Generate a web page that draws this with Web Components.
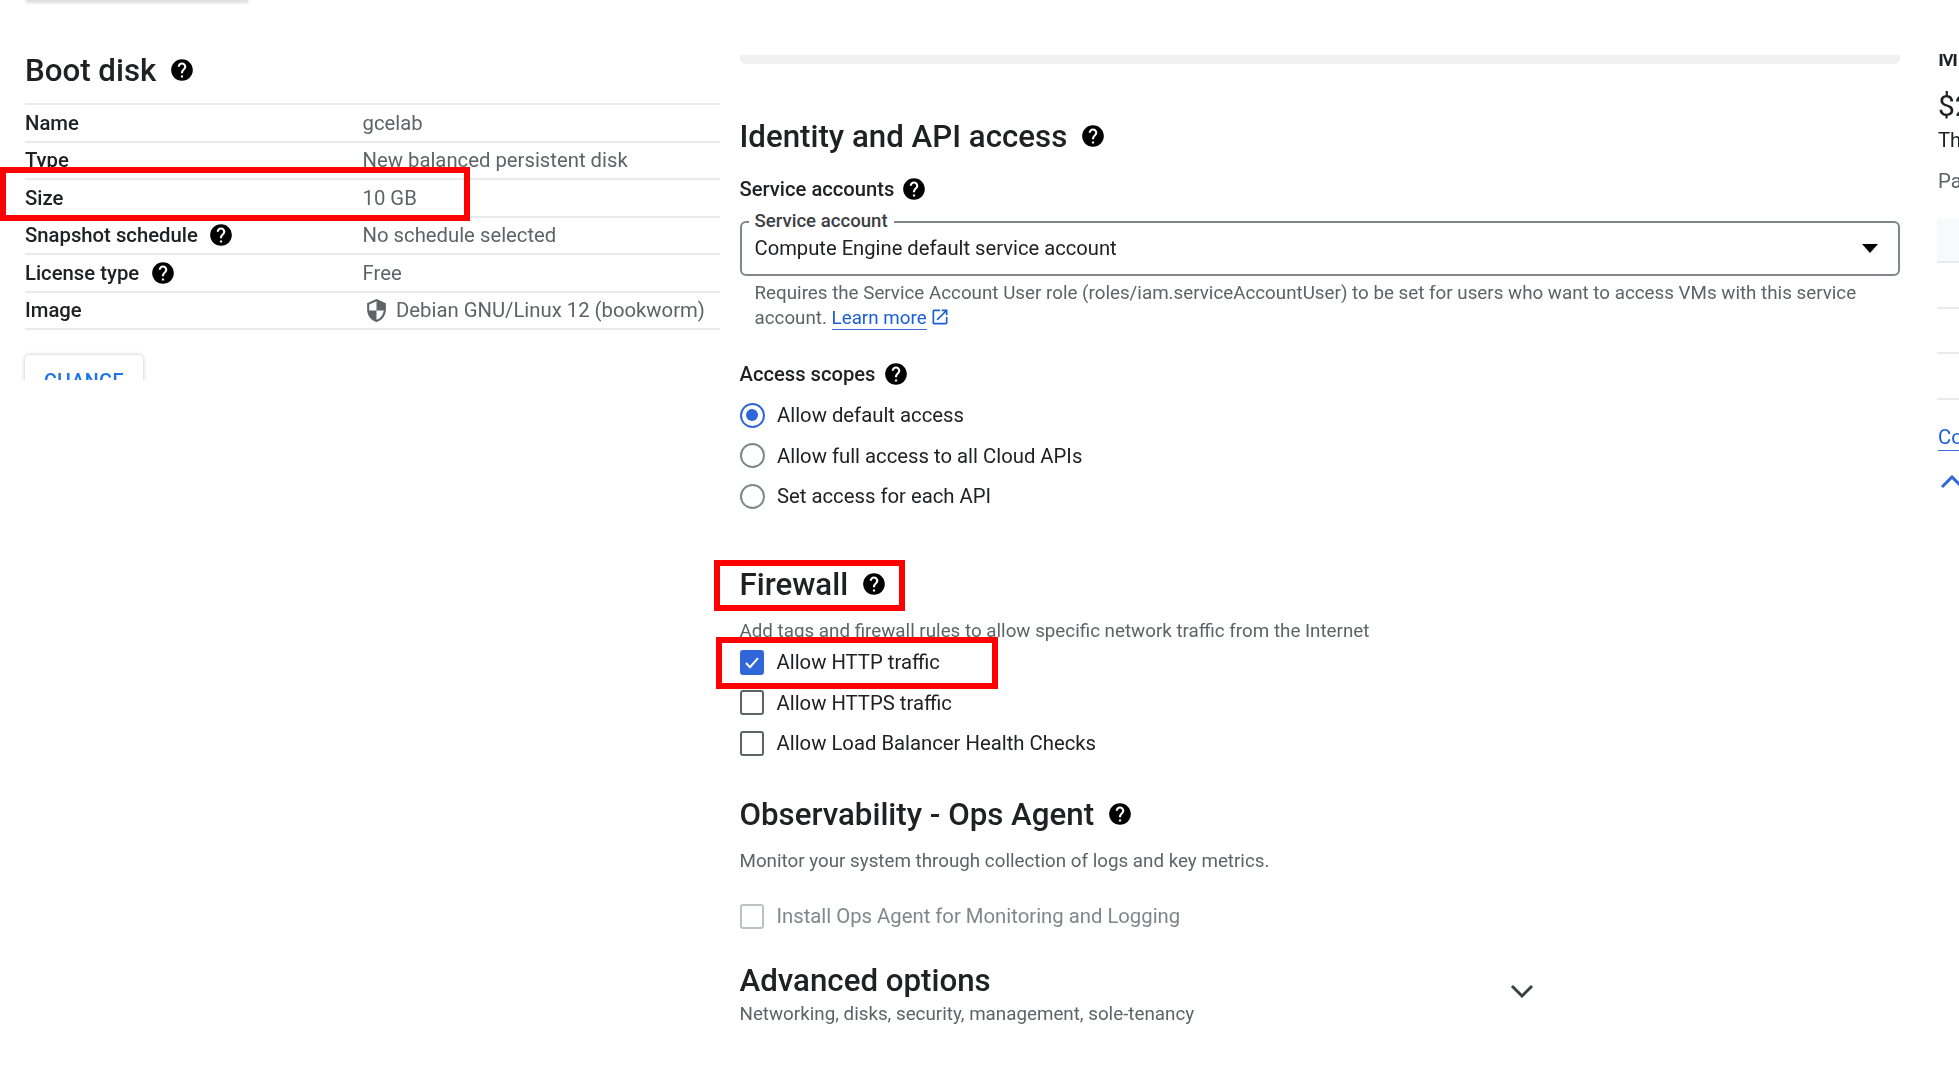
<!DOCTYPE html>
<html lang="en"><head><meta charset="utf-8"><title>Create an instance</title>
<style>
html,body{margin:0;padding:0;height:1070px;overflow:hidden;background:#fff}
body{font-family:Roboto,"Liberation Sans",sans-serif;color:#202124;font-size:20.3px}
</style></head><body>
<gce-page>
  <gce-boot slot="left"></gce-boot>
  <gce-main slot="main"></gce-main>
  <gce-cost slot="right"></gce-cost>
  <gce-mark slot="marks" style="left:0;top:167px;width:470px;height:54px"></gce-mark>
  <gce-mark slot="marks" style="left:714px;top:560px;width:191px;height:51px"></gce-mark>
  <gce-mark slot="marks" style="left:716px;top:637px;width:282px;height:52px"></gce-mark>
</gce-page>
<script>
const P={
 help:'M12 2C6.48 2 2 6.48 2 12s4.48 10 10 10 10-4.48 10-10S17.52 2 12 2zm1 17h-2v-2h2v2zm2.07-7.75l-.9.92C13.45 12.9 13 13.5 13 15h-2v-.5c0-1.1.45-2.1 1.17-2.83l1.24-1.26c.37-.36.59-.86.59-1.41 0-1.1-.9-2-2-2s-2 .9-2 2H8c0-2.21 1.79-4 4-4s4 1.79 4 4c0 .88-.36 1.68-.93 2.25z',
 shield:'M12 1L3 5v6c0 5.55 3.84 10.74 9 12 5.16-1.26 9-6.45 9-12V5l-9-4zm0 10.99h7c-.53 4.12-3.28 7.79-7 8.94V12H5V6.3l7-3.11v8.8z',
 open:'M19 19H5V5h7V3H5c-1.11 0-2 .9-2 2v14c0 1.1.89 2 2 2h14c1.1 0 2-.9 2-2v-7h-2v7zM14 3v2h3.59l-9.83 9.83 1.41 1.41L19 6.41V10h2V3h-7z'
};
const def=(n,css,html)=>customElements.define(n,class extends HTMLElement{
  constructor(){super();this.attachShadow({mode:'open'}).innerHTML='<style>'+css+'</style>'+(typeof html==='function'?html(this):html)}
  connectedCallback(){ if(typeof html==='function') this.shadowRoot.innerHTML='<style>'+css+'</style>'+html(this) }
});
def('gce-page',`:host{display:block;position:relative;width:1959px;height:1070px;overflow:hidden}
 .cols{display:flex;align-items:flex-start;filter:blur(.4px);height:1070px}
 ::slotted([slot=left]){width:695px;margin-left:25px;flex:none}
 ::slotted([slot=main]){width:1160px;margin-left:19.5px;flex:none}
 ::slotted([slot=right]){width:300px;margin-left:38.5px;flex:none}`,
 `<div class="cols"><slot name="left"></slot><slot name="main"></slot><slot name="right"></slot></div><slot name="marks"></slot>`);
def('gce-mark',`:host{display:block;position:absolute;box-sizing:border-box;border:6px solid #f00;pointer-events:none}`,'');
def('gce-help',`:host{display:inline-flex;flex:none;color:#000}svg{display:block;width:100%;height:100%;fill:currentColor}`,
 `<svg viewBox="0 0 24 24"><path d="${P.help}"/></svg>`);
def('gce-title',`:host{display:flex;align-items:center;height:36px;font:500 31.25px/36px Roboto,sans-serif;color:#202124;white-space:nowrap}
 gce-help{width:26px;height:26px;margin-left:13px;margin-top:-2px}`,
 `<slot></slot><gce-help></gce-help>`);
def('gce-sub',`:host{display:flex;align-items:center;height:25px;font:500 20.2px/25px Roboto,sans-serif;color:#202124;white-space:nowrap}
 gce-help{width:26px;height:26px;margin-left:7px;margin-top:-1px}`,`<slot></slot><gce-help></gce-help>`);
def('gce-row',`:host{display:grid;grid-template-columns:337.5px 1fr;align-items:center;box-sizing:border-box;height:37.5px;border-bottom:2px solid #e8eaed;font-size:20.3px;white-space:nowrap}
 .k{display:flex;align-items:center;font-weight:500;color:#202124}
 .v{color:#5f6368;display:flex;align-items:center}
 gce-help{width:26px;height:26px;margin-left:10.5px}
 svg{width:25px;height:25px;fill:#5f6368;margin-right:7.5px;margin-left:1px;flex:none}`,
 el=>`<div class="k">${el.getAttribute('k')||''}${el.hasAttribute('help')?'<gce-help></gce-help>':''}</div><div class="v">${el.hasAttribute('shield')?`<svg viewBox="0 0 24 24"><path d="${P.shield}"/></svg>`:''}<slot></slot></div>`);
def('gce-boot',`:host{display:block}
 .stub{width:222px;height:1px;margin-left:1px;background:#e0e0e0;box-shadow:0 1px 3px rgba(60,64,67,.55)}
 gce-title{margin-top:52px}
 .tbl{margin-top:14px;border-top:2px solid #e8eaed}
 .clip{height:25px;margin:5px 0 0 -10px;padding:20px 0 0 10px;overflow:hidden}
 .btn{width:118px;height:50px;box-sizing:border-box;border-radius:5px;background:#fff;box-shadow:0 0 4px rgba(60,64,67,.3);color:#1a73e8;font:500 19.6px/50px Roboto,sans-serif;text-align:center;letter-spacing:.3px;padding-top:1.5px}`,
 `<div class="stub"></div><gce-title>Boot disk</gce-title>
 <div class="tbl">
  <gce-row k="Name">gcelab</gce-row><gce-row k="Type">New balanced persistent disk</gce-row>
  <gce-row k="Size">10 GB</gce-row><gce-row k="Snapshot schedule" help>No schedule selected</gce-row>
  <gce-row k="License type" help>Free</gce-row><gce-row k="Image" shield>Debian GNU/Linux 12 (bookworm)</gce-row>
 </div><div class="clip"><div class="btn">CHANGE</div></div>`);
def('gce-select',`:host{display:flex;align-items:center;position:relative;box-sizing:border-box;height:55px;border:2px solid #80868b;border-radius:6px;padding:0 20px 2px 13px;justify-content:space-between;font-size:20.2px;color:#202124}
 .lab{position:absolute;left:7px;top:-13.5px;padding:0 6px;background:#fff;font:500 18.6px/22px Roboto,sans-serif;color:#3c4043}
 i{display:block;width:0;height:0;border:8.5px solid transparent;border-top:9px solid #000;border-bottom:0;margin-top:2px}`,
 `<span class="lab">Service account</span><span><slot></slot></span><i></i>`);
def('gce-radio',`:host{display:flex;align-items:center;height:40.6px;gap:12.5px;font-size:20.3px;white-space:nowrap}
 b{display:block;box-sizing:border-box;width:25px;height:25px;border-radius:50%;border:2.5px solid #80868b;position:relative;flex:none}
 :host([on]) b{border-color:#2f66d9}
 :host([on]) b::after{content:"";position:absolute;inset:4.5px;border-radius:50%;background:#2f66d9}`,`<b></b><slot></slot>`);
def('gce-check',`:host{display:flex;align-items:center;height:40.5px;gap:13px;font-size:20.3px;white-space:nowrap}
 b{display:block;box-sizing:border-box;width:24px;height:25px;border-radius:3px;border:2.5px solid #5f6368;flex:none;position:relative}
 :host([on]) b{background:#2f66d9;border-color:#2f66d9}
 :host([off]){color:#80868b}:host([off]) b{border-color:#bdc1c6}
 svg{position:absolute;inset:0;width:100%;height:100%;fill:none;stroke:#fff;stroke-width:2}`,
 el=>`<b>${el.hasAttribute('on')?'<svg viewBox="0 0 20 20"><path d="M4 10.5l4 4.2 8-9"/></svg>':''}</b><slot></slot>`);
def('gce-main',`:host{display:block;padding-top:55px}
 .bar{height:9px;background:#f1f1f1;border-radius:0 0 6px 6px}
 .hint{color:#5f6368;font-size:18.8px;line-height:25px}
 .in{padding-left:15px;margin-top:5px;padding-right:30px}
 a{color:#1a5fd8;text-decoration:none;border-bottom:1.5px solid #3b6fd8}
 a+svg{width:20px;height:20px;fill:#1a5fd8;vertical-align:-3px;margin-left:3px}
 .adv{display:flex;justify-content:space-between;width:794px;margin-top:26px;align-items:flex-end}
 .adv svg{width:24px;height:14px;fill:none;stroke:#3c4043;stroke-width:3;margin-bottom:1px}`,
 `<div class="bar"></div>
 <gce-title style="margin-top:55px">Identity and API access</gce-title>
 <gce-sub style="margin-top:22px">Service accounts</gce-sub>
 <gce-select style="margin-top:19px">Compute Engine default service account</gce-select>
 <div class="hint in">Requires the Service Account User role (roles/iam.serviceAccountUser) to be set for users who want to access VMs with this service account. <a>Learn more</a><svg viewBox="0 0 24 24"><path d="${P.open}"/></svg></div>
 <gce-sub style="margin-top:31px">Access scopes</gce-sub>
 <gce-radio on style="margin-top:8px">Allow default access</gce-radio>
 <gce-radio>Allow full access to all Cloud APIs</gce-radio>
 <gce-radio>Set access for each API</gce-radio>
 <gce-title style="margin-top:50.2px">Firewall</gce-title>
 <div class="hint" style="margin-top:16px">Add tags and firewall rules to allow specific network traffic from the Internet</div>
 <gce-check on style="margin-top:-2px">Allow HTTP traffic</gce-check>
 <gce-check>Allow HTTPS traffic</gce-check>
 <gce-check>Allow Load Balancer Health Checks</gce-check>
 <gce-title style="margin-top:33.8px">Observability - Ops Agent</gce-title>
 <div class="hint" style="margin-top:16px">Monitor your system through collection of logs and key metrics.</div>
 <gce-check off style="margin-top:21.8px">Install Ops Agent for Monitoring and Logging</gce-check>
 <div class="adv"><div style="font:500 31.25px/36px Roboto,sans-serif;color:#202124">Advanced options</div><svg viewBox="0 0 24 14"><path d="M2 2l10 10L22 2"/></svg></div>
 <div class="hint" style="margin-top:3.7px">Networking, disks, security, management, sole-tenancy</div>`);
def('gce-cost',`:host{display:block;padding-top:54px;white-space:nowrap}
 .m{height:14px;overflow:hidden;font:500 23px/10px Roboto,sans-serif;color:#202124}
 .p{font:400 30px/36px Roboto,sans-serif;margin-top:20px;color:#202124}
 .t{font-size:20.3px;line-height:25px;margin-top:3.5px;color:#202124}
 .g{font-size:20.3px;line-height:25px;margin-top:16px;color:#5f6368}
 .h{box-sizing:border-box;height:44px;margin-top:25.5px;background:#f8f9fa;border-bottom:2px solid #e8eaed;margin-left:-1px}
 .r{box-sizing:border-box;height:45.6px;border-bottom:2px solid #e8eaed;margin-left:-1px}
 .c{font-size:20.3px;line-height:25px;margin-top:25px}
 a{color:#1a5fd8;border-bottom:1.5px solid #3b6fd8;padding-bottom:1px}
 svg{display:block;width:24px;height:14px;margin:25px 0 0 2px;fill:none;stroke:#2f66d9;stroke-width:3}`,
 `<div class="m">M</div><div class="p">$2</div><div class="t">Th</div><div class="g">Pa</div>
 <div class="h"></div><div class="r"></div><div class="r"></div><div class="r"></div>
 <div class="c"><a>Co</a></div><svg viewBox="0 0 24 14"><path d="M2 12L12 2l10 10"/></svg>`);
</script>
</body></html>
